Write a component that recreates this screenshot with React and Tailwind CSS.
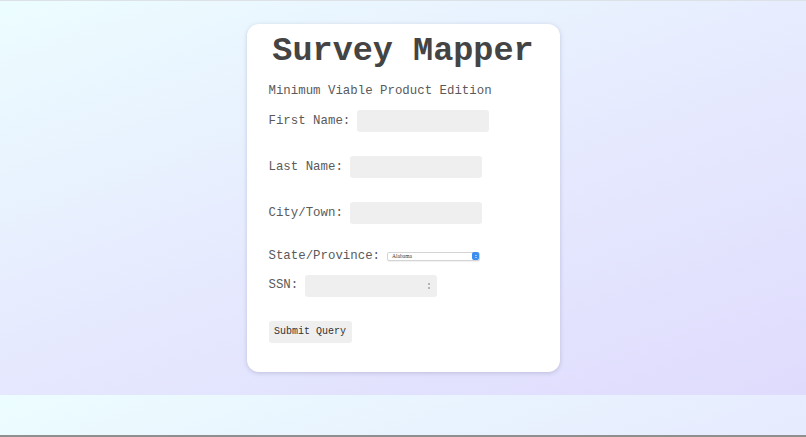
const mono = { fontFamily: '"Liberation Mono", "Courier New", monospace' };

function TextBox({ spinner = false }) {
  return (
    <div className="relative w-[132px] h-[22px] rounded-[3px] bg-[#efefef]">
      {spinner && (
        <div className="absolute right-[7px] top-[8px] flex flex-col gap-[2px]">
          <span className="block w-[2px] h-[2px] bg-[#b5b5b5]" />
          <span className="block w-[2px] h-[2px] bg-[#b5b5b5]" />
        </div>
      )}
    </div>
  );
}

function StateSelect() {
  return (
    <div className="flex items-center justify-between w-[93px] h-[9px] rounded-[2px] border border-[#d4d4d4] bg-white pl-[4px] pr-0 shadow-[0_1px_1px_rgba(0,0,0,0.06)]">
      <span className="text-[5.5px] leading-none text-[#333]" style={{ fontFamily: '"Liberation Serif", serif' }}>
        Alabama
      </span>
      <span className="flex flex-col items-center justify-center gap-[1px] w-[7px] h-[8px] rounded-[2px] bg-[#3b8df0]">
        <span className="block w-0 h-0 border-x-[1.5px] border-x-transparent border-b-[1.5px] border-b-white" />
        <span className="block w-0 h-0 border-x-[1.5px] border-x-transparent border-t-[1.5px] border-t-white" />
      </span>
    </div>
  );
}

function Field({ label, children, className = "" }) {
  return (
    <div className={`flex items-center gap-[7px] ${className}`}>
      <span className="text-[12.4px] text-[#5a5a5a] whitespace-pre">{label}</span>
      {children}
    </div>
  );
}

export default function App() {
  return (
    <div
      className="h-[437px] overflow-hidden border-t border-[#dde2e6] border-b-2 border-b-[#8f8f8f] bg-[linear-gradient(160deg,#ecfdff_0%,#e6eafe_50%,#dfdbfd_100%)] bg-[length:100%_394px] bg-repeat-y"
      style={mono}
    >
      <div className="mx-auto mt-[23px] w-[313px] h-[348px] rounded-[12px] bg-white shadow-[0_1px_4px_rgba(80,80,120,0.25)] px-[22px] pt-[8px]">
        <h1 className="text-center text-[33.5px] leading-[38px] font-bold text-[#444]">
          Survey Mapper
        </h1>
        <p className="mt-[13px] text-[12.4px] leading-[16px] text-[#5a5a5a]">
          Minimum Viable Product Edition
        </p>
        <Field label="First Name:" className="mt-[11px]">
          <TextBox />
        </Field>
        <Field label="Last Name:" className="mt-[24px]">
          <TextBox />
        </Field>
        <Field label="City/Town:" className="mt-[24px]">
          <TextBox />
        </Field>
        <Field label="State/Province:" className="mt-[23px]">
          <StateSelect />
        </Field>
        <Field label="SSN:" className="mt-[9px]">
          <TextBox spinner />
        </Field>
        <button
          type="button"
          className="mt-[24px] h-[22px] w-[83px] rounded-[3px] bg-[#efefef] text-[10px] text-[#333]"
          style={mono}
        >
          Submit Query
        </button>
      </div>
    </div>
  );
}
